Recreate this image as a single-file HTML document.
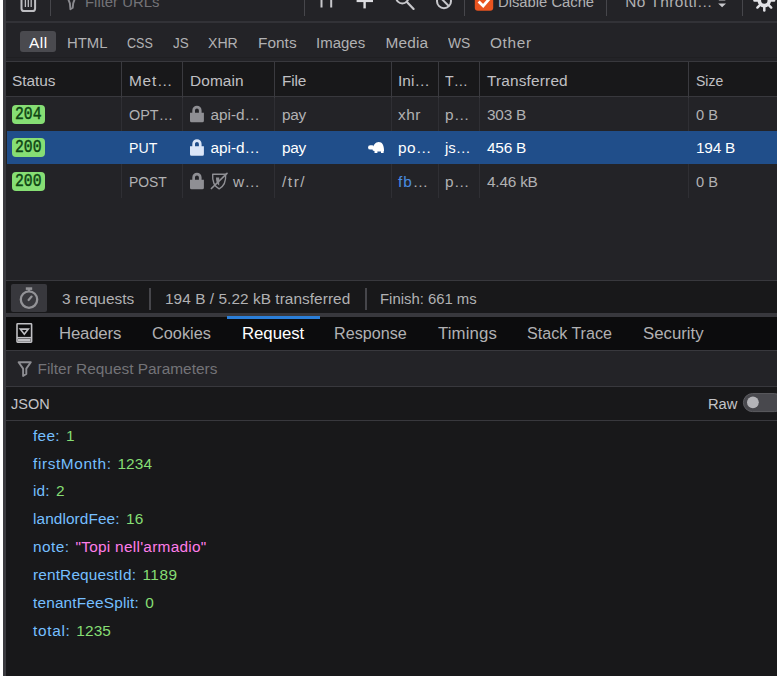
<!DOCTYPE html>
<html><head><meta charset="utf-8"><title>Network</title>
<style>
html,body{margin:0;padding:0;background:#18181a;}
#r{position:relative;width:777px;height:676px;overflow:hidden;font-family:'Liberation Sans', sans-serif;}
#r div{position:absolute;}
#r span{position:absolute;white-space:pre;line-height:20px;height:20px;}
#r svg{position:absolute;overflow:visible;}
</style></head><body><div id="r">
<div style="left:0px;top:0px;width:3px;height:676px;background:#ffffff;"></div>
<div style="left:3px;top:0px;width:3px;height:676px;background:#3a3a3f;"></div>
<div style="left:6px;top:0px;width:771px;height:97px;background:#232327;"></div>
<div style="left:6px;top:20.6px;width:771px;height:2px;background:#323237;"></div>
<div style="left:6px;top:56.6px;width:771px;height:1px;background:#1f1f22;"></div>
<div style="left:6px;top:60.5px;width:771px;height:1.6px;background:#38383d;"></div>
<div style="left:6px;top:62px;width:771px;height:34px;background:#18181a;"></div>
<div style="left:6px;top:96px;width:771px;height:1.5px;background:#38383d;"></div>
<div style="left:6px;top:97px;width:771px;height:184px;background:#232327;"></div>
<div style="left:121px;top:62px;width:1.4px;height:35.5px;background:#3a3a3f;"></div>
<div style="left:121px;top:97.5px;width:1.4px;height:100.8px;background:#2f2f34;"></div>
<div style="left:182px;top:62px;width:1.4px;height:35.5px;background:#3a3a3f;"></div>
<div style="left:182px;top:97.5px;width:1.4px;height:100.8px;background:#2f2f34;"></div>
<div style="left:274px;top:62px;width:1.4px;height:35.5px;background:#3a3a3f;"></div>
<div style="left:274px;top:97.5px;width:1.4px;height:100.8px;background:#2f2f34;"></div>
<div style="left:390.5px;top:62px;width:1.4px;height:35.5px;background:#3a3a3f;"></div>
<div style="left:390.5px;top:97.5px;width:1.4px;height:100.8px;background:#2f2f34;"></div>
<div style="left:438px;top:62px;width:1.4px;height:35.5px;background:#3a3a3f;"></div>
<div style="left:438px;top:97.5px;width:1.4px;height:100.8px;background:#2f2f34;"></div>
<div style="left:479px;top:62px;width:1.4px;height:35.5px;background:#3a3a3f;"></div>
<div style="left:479px;top:97.5px;width:1.4px;height:100.8px;background:#2f2f34;"></div>
<div style="left:688px;top:62px;width:1.4px;height:35.5px;background:#3a3a3f;"></div>
<div style="left:688px;top:97.5px;width:1.4px;height:100.8px;background:#2f2f34;"></div>
<div style="left:7.2px;top:130.6px;width:769.8px;height:33.8px;background:#204e8a;"></div>
<div style="left:6px;top:280.4px;width:771px;height:1px;background:#38383d;"></div>
<div style="left:6px;top:281.4px;width:771px;height:31.6px;background:#18181a;"></div>
<div style="left:6px;top:312.8px;width:771px;height:4.2px;background:#38383d;"></div>
<div style="left:6px;top:317px;width:771px;height:32.5px;background:#0c0c0d;"></div>
<div style="left:6px;top:349.5px;width:771px;height:1px;background:#38383d;"></div>
<div style="left:6px;top:350.5px;width:771px;height:35px;background:#232327;"></div>
<div style="left:6px;top:385.5px;width:771px;height:1px;background:#38383d;"></div>
<div style="left:6px;top:386.5px;width:771px;height:33.5px;background:#18181a;"></div>
<div style="left:6px;top:420px;width:771px;height:1px;background:#38383d;"></div>
<div style="left:6px;top:421px;width:771px;height:255px;background:#18181a;"></div>
<div style="left:226.7px;top:315.9px;width:93px;height:3px;background:#2b7fd9;"></div>
<div style="left:20px;top:30.8px;width:35.8px;height:21.4px;background:#4a4a4f;border-radius:3px"></div>
<div style="left:10.6px;top:284px;width:36.2px;height:27.7px;background:#38383d;border-radius:2px"></div>
<div style="left:50.3px;top:0px;width:1.2px;height:16px;background:#46464b;"></div>
<div style="left:304.3px;top:0px;width:1.2px;height:16px;background:#46464b;"></div>
<div style="left:464px;top:0px;width:1.2px;height:16px;background:#46464b;"></div>
<div style="left:606.3px;top:0px;width:1.2px;height:16px;background:#46464b;"></div>
<div style="left:742.3px;top:0px;width:1.2px;height:16px;background:#46464b;"></div>
<div style="left:149.3px;top:287.6px;width:1.4px;height:22px;background:#46464b;"></div>
<div style="left:365.2px;top:287.6px;width:1.4px;height:22px;background:#46464b;"></div>
<div style="left:12px;top:105.0px;width:33.2px;height:19px;background:#86de74;border-radius:4px"></div>
<div style="left:12px;top:138.0px;width:33.2px;height:19px;background:#86de74;border-radius:4px"></div>
<div style="left:12px;top:172.0px;width:33.2px;height:19px;background:#86de74;border-radius:4px"></div>
<svg width="777" height="676" viewBox="0 0 777 676" style="left:0;top:0" fill="none">
<!-- trash -->
<g stroke="#bebec2" stroke-width="2" fill="none">
<path d="M21.5 -6 V8.4 a2.6 2.6 0 0 0 2.6 2.6 H32.5 a2.6 2.6 0 0 0 2.6 -2.6 V-6"/>
<path d="M25.4 -4 V7 M28.3 -4 V7 M31.2 -4 V7" stroke-width="1.3"/>
</g>
<!-- filter funnel top (cut) -->
<path d="M67.4 -3 L69.9 3.4 L70.4 9.2 L72.7 7.8 L73.2 3.4 L75.4 -3" stroke="#8a8a8f" stroke-width="1.9" fill="none" stroke-linejoin="round"/>
<!-- pause -->
<path d="M321.5 -6 V7.5 M331.2 -6 V7.5" stroke="#c8c8cc" stroke-width="2"/>
<!-- plus -->
<path d="M364.6 -8 V8.4" stroke="#dcdce0" stroke-width="2.4"/><path d="M356.6 0.6 H373" stroke="#dcdce0" stroke-width="3"/>
<!-- search -->
<circle cx="402.3" cy="-2.8" r="6.2" stroke="#c8c8cc" stroke-width="2"/>
<path d="M406.9 1.9 L413.6 8.9" stroke="#c8c8cc" stroke-width="2.2" stroke-linecap="round"/>
<!-- block -->
<circle cx="444" cy="1.2" r="7" stroke="#c8c8cc" stroke-width="2"/>
<path d="M439 -3.8 L449 6.2" stroke="#c8c8cc" stroke-width="2"/>
<!-- checkbox -->
<rect x="474.8" y="-8" width="18.4" height="18.8" rx="3" fill="#e95420"/>
<path d="M478.6 1.4 L483.2 6 L491.4 -3.6" stroke="#ffffff" stroke-width="2.8" fill="none"/>
<!-- throttle arrow -->
<path d="M718.2 3.4 H726 L722.1 7.2 Z" fill="#c8c8cc"/>
<path d="M718.6 0.6 H725.6 L722.1 -3 Z" fill="#c8c8cc"/>
<!-- gear -->
<g transform="translate(764.3 0.6)" stroke="#e2e2e6" fill="none">
<circle r="5" stroke-width="3.6"/>
<path d="M0 6 V9.8" stroke-width="2.5" stroke-linecap="round" transform="rotate(0)"/>
<path d="M0 6 V9.8" stroke-width="2.5" stroke-linecap="round" transform="rotate(45)"/>
<path d="M0 6 V9.8" stroke-width="2.5" stroke-linecap="round" transform="rotate(90)"/>
<path d="M0 6 V9.8" stroke-width="2.5" stroke-linecap="round" transform="rotate(135)"/>
<path d="M0 6 V9.8" stroke-width="2.5" stroke-linecap="round" transform="rotate(180)"/>
<path d="M0 6 V9.8" stroke-width="2.5" stroke-linecap="round" transform="rotate(225)"/>
<path d="M0 6 V9.8" stroke-width="2.5" stroke-linecap="round" transform="rotate(270)"/>
<path d="M0 6 V9.8" stroke-width="2.5" stroke-linecap="round" transform="rotate(315)"/>
</g>
<!-- locks -->
<path d="M190 112.8 h13.9 v7.9 a1.5 1.5 0 0 1 -1.5 1.5 h-10.9 a1.5 1.5 0 0 1 -1.5 -1.5 z" fill="#8f8f94"/>
<path d="M193.65 113.4 v-3 a3.3 3.3 0 0 1 6.6 0 v3" fill="none" stroke="#8f8f94" stroke-width="2.7"/>
<path d="M190 146.3 h13.9 v7.9 a1.5 1.5 0 0 1 -1.5 1.5 h-10.9 a1.5 1.5 0 0 1 -1.5 -1.5 z" fill="#dbe6f8"/>
<path d="M193.65 146.9 v-3 a3.3 3.3 0 0 1 6.6 0 v3" fill="none" stroke="#dbe6f8" stroke-width="2.7"/>
<path d="M190 179.8 h13.9 v7.9 a1.5 1.5 0 0 1 -1.5 1.5 h-10.9 a1.5 1.5 0 0 1 -1.5 -1.5 z" fill="#8f8f94"/>
<path d="M193.65 180.4 v-3 a3.3 3.3 0 0 1 6.6 0 v3" fill="none" stroke="#8f8f94" stroke-width="2.7"/>
<!-- tracking shield -->
<g stroke="#8f8f94" stroke-width="1.4" fill="none" stroke-linejoin="round">
<path d="M212.7 174.2 h12.9 c0.4 5 -0.6 11.4 -6.45 14.6 c-5.85 -3.2 -6.85 -9.6 -6.45 -14.6 z"/>
<path d="M216 177.4 h3.2 v8.2 c-2.4 -1.6 -3.3 -4.6 -3.2 -8.2 z" fill="#8f8f94" stroke="none"/>
<path d="M211.4 188.5 L227 173.4" stroke-width="1.7" stroke-linecap="round"/>
</g>
<!-- turtle -->
<g fill="#ffffff">
<path d="M372.6 150.2 c0 -5 3 -8.3 6.2 -8.3 c3.4 0 5.2 3.4 5.2 8.3 v1 h-0.4 v1.9 h-2.6 v-1.7 h-3.6 v1.7 h-2.9 v-2 c-1 -0.2 -1.6 -0.5 -1.9 -0.9z"/>
<path d="M368 147.4 a2.3 2.2 0 0 1 2.3 -2.2 h2.2 a2.2 2.2 0 0 1 1.4 2 v2.4 h-3.6 a2.3 2.2 0 0 1 -2.3 -2.2 z"/>
</g>
<!-- stopwatch -->
<g stroke="#939397" stroke-width="2.3" fill="none">
<circle cx="29" cy="299.6" r="8.2"/>
<path d="M25.8 288.6 h6.4" stroke-width="2.6"/>
<path d="M29 289 v2.4" stroke-width="2.2"/>
<path d="M28.6 300 L31.6 296.6" stroke-width="2.2" stroke-linecap="round"/>
</g>
<!-- sidebar toggle -->
<g stroke="#c0c0c4" stroke-width="1.6" fill="none">
<rect x="17" y="323.8" width="14.6" height="18.4" rx="0.6"/>
<path d="M20.4 329.2 h7.8 l-3.9 5 z" stroke-width="1.7"/>
<path d="M17 337.7 h14.6"/>
<path d="M18 340.2 h12.6" stroke-width="2.6"/>
</g>
<!-- filter funnel -->
<path d="M18.6 362.3 H30.8 L26.3 368.6 V374 L23.1 376 V368.6 Z" stroke="#8d8d92" stroke-width="1.9" fill="none" stroke-linejoin="round"/>
<!-- toggle switch -->
<rect x="743.4" y="393.6" width="40" height="18" rx="9" fill="#48484d" stroke="#5c5c61" stroke-width="1"/>
<circle cx="752.9" cy="402.3" r="5.9" fill="#b4b4b8"/>
</svg>

<span style="left:84.5px;top:-8.5px;color:#737378;font-size:15.4px;letter-spacing:0.00px;font-family:'Liberation Sans', sans-serif;transform-origin:0 50%;transform:scaleX(0.967)">Filter URLs</span>
<span style="left:498.0px;top:-8.5px;color:#b1b1b3;font-size:15.4px;letter-spacing:0.00px;font-family:'Liberation Sans', sans-serif;transform-origin:0 50%;transform:scaleX(0.960)">Disable Cache</span>
<span style="left:625.3px;top:-8.5px;color:#b1b1b3;font-size:15.4px;letter-spacing:0.45px;font-family:'Liberation Sans', sans-serif">No Throttl…</span>
<span style="left:29.0px;top:32.9px;color:#ffffff;font-size:15.4px;letter-spacing:0.48px;font-family:'Liberation Sans', sans-serif">All</span>
<span style="left:67.0px;top:32.9px;color:#b1b1b3;font-size:15.4px;letter-spacing:0.00px;font-family:'Liberation Sans', sans-serif;transform-origin:0 50%;transform:scaleX(0.966)">HTML</span>
<span style="left:127.0px;top:32.9px;color:#b1b1b3;font-size:15.4px;letter-spacing:0.00px;font-family:'Liberation Sans', sans-serif;transform-origin:0 50%;transform:scaleX(0.813)">CSS</span>
<span style="left:173.0px;top:32.9px;color:#b1b1b3;font-size:15.4px;letter-spacing:0.00px;font-family:'Liberation Sans', sans-serif;transform-origin:0 50%;transform:scaleX(0.870)">JS</span>
<span style="left:208.0px;top:32.9px;color:#b1b1b3;font-size:15.4px;letter-spacing:0.00px;font-family:'Liberation Sans', sans-serif;transform-origin:0 50%;transform:scaleX(0.917)">XHR</span>
<span style="left:258.0px;top:32.9px;color:#b1b1b3;font-size:15.4px;letter-spacing:0.03px;font-family:'Liberation Sans', sans-serif">Fonts</span>
<span style="left:316.0px;top:32.9px;color:#b1b1b3;font-size:15.4px;letter-spacing:0.00px;font-family:'Liberation Sans', sans-serif;transform-origin:0 50%;transform:scaleX(0.974)">Images</span>
<span style="left:385.5px;top:32.9px;color:#b1b1b3;font-size:15.4px;letter-spacing:0.15px;font-family:'Liberation Sans', sans-serif">Media</span>
<span style="left:447.5px;top:32.9px;color:#b1b1b3;font-size:15.4px;letter-spacing:0.00px;font-family:'Liberation Sans', sans-serif;transform-origin:0 50%;transform:scaleX(0.899)">WS</span>
<span style="left:490.0px;top:32.9px;color:#b1b1b3;font-size:15.4px;letter-spacing:0.65px;font-family:'Liberation Sans', sans-serif">Other</span>
<span style="left:12.0px;top:71.0px;color:#c0c0c4;font-size:15.4px;letter-spacing:-0.03px;font-family:'Liberation Sans', sans-serif">Status</span>
<span style="left:129.0px;top:71.0px;color:#c0c0c4;font-size:15.4px;letter-spacing:0.80px;font-family:'Liberation Sans', sans-serif">Met…</span>
<span style="left:190.0px;top:71.0px;color:#c0c0c4;font-size:15.4px;letter-spacing:0.11px;font-family:'Liberation Sans', sans-serif">Domain</span>
<span style="left:282.0px;top:71.0px;color:#c0c0c4;font-size:15.4px;letter-spacing:-0.15px;font-family:'Liberation Sans', sans-serif">File</span>
<span style="left:398.0px;top:71.0px;color:#c0c0c4;font-size:15.4px;letter-spacing:0.05px;font-family:'Liberation Sans', sans-serif">Ini…</span>
<span style="left:445.0px;top:71.0px;color:#c0c0c4;font-size:15.4px;letter-spacing:0.00px;font-family:'Liberation Sans', sans-serif;transform-origin:0 50%;transform:scaleX(0.923)">T…</span>
<span style="left:487.0px;top:71.0px;color:#c0c0c4;font-size:15.4px;letter-spacing:0.17px;font-family:'Liberation Sans', sans-serif">Transferred</span>
<span style="left:696.0px;top:71.0px;color:#c0c0c4;font-size:15.4px;letter-spacing:0.00px;font-family:'Liberation Sans', sans-serif;transform-origin:0 50%;transform:scaleX(0.910)">Size</span>
<span style="left:129.0px;top:105.0px;color:#b1b1b3;font-size:15.4px;letter-spacing:0.00px;font-family:'Liberation Sans', sans-serif;transform-origin:0 50%;transform:scaleX(0.937)">OPT…</span>
<span style="left:210.5px;top:105.0px;color:#b1b1b3;font-size:15.4px;letter-spacing:-0.03px;font-family:'Liberation Sans', sans-serif">api-d…</span>
<span style="left:282.0px;top:105.0px;color:#b1b1b3;font-size:15.4px;letter-spacing:-0.25px;font-family:'Liberation Sans', sans-serif">pay</span>
<span style="left:398.0px;top:105.0px;color:#b1b1b3;font-size:15.4px;letter-spacing:0.51px;font-family:'Liberation Sans', sans-serif">xhr</span>
<span style="left:445.0px;top:105.0px;color:#b1b1b3;font-size:15.4px;letter-spacing:0.34px;font-family:'Liberation Sans', sans-serif">p…</span>
<span style="left:487.0px;top:105.0px;color:#b1b1b3;font-size:15.4px;letter-spacing:-0.22px;font-family:'Liberation Sans', sans-serif">303 B</span>
<span style="left:696.0px;top:105.0px;color:#b1b1b3;font-size:15.4px;letter-spacing:0.00px;font-family:'Liberation Sans', sans-serif;transform-origin:0 50%;transform:scaleX(0.951)">0 B</span>
<span style="left:129.0px;top:137.9px;color:#ffffff;font-size:15.4px;letter-spacing:0.00px;font-family:'Liberation Sans', sans-serif;transform-origin:0 50%;transform:scaleX(0.918)">PUT</span>
<span style="left:210.5px;top:137.9px;color:#ffffff;font-size:15.4px;letter-spacing:-0.03px;font-family:'Liberation Sans', sans-serif">api-d…</span>
<span style="left:282.0px;top:137.9px;color:#ffffff;font-size:15.4px;letter-spacing:-0.25px;font-family:'Liberation Sans', sans-serif">pay</span>
<span style="left:398.0px;top:137.9px;color:#ffffff;font-size:15.4px;letter-spacing:0.39px;font-family:'Liberation Sans', sans-serif">po…</span>
<span style="left:445.0px;top:137.9px;color:#ffffff;font-size:15.4px;letter-spacing:0.00px;font-family:'Liberation Sans', sans-serif;transform-origin:0 50%;transform:scaleX(0.971)">js…</span>
<span style="left:487.0px;top:137.9px;color:#ffffff;font-size:15.4px;letter-spacing:-0.22px;font-family:'Liberation Sans', sans-serif">456 B</span>
<span style="left:696.0px;top:137.9px;color:#ffffff;font-size:15.4px;letter-spacing:-0.22px;font-family:'Liberation Sans', sans-serif">194 B</span>
<span style="left:129.0px;top:172.0px;color:#b1b1b3;font-size:15.4px;letter-spacing:0.00px;font-family:'Liberation Sans', sans-serif;transform-origin:0 50%;transform:scaleX(0.901)">POST</span>
<span style="left:233.0px;top:172.0px;color:#b1b1b3;font-size:15.4px;letter-spacing:0.38px;font-family:'Liberation Sans', sans-serif">w…</span>
<span style="left:282.0px;top:172.0px;color:#b1b1b3;font-size:15.4px;letter-spacing:1.56px;font-family:'Liberation Sans', sans-serif">/tr/</span>
<span style="left:398.0px;top:172.0px;color:#4a8be0;font-size:15.4px;letter-spacing:0.96px;font-family:'Liberation Sans', sans-serif">fb<i style="font-style:normal;color:#b1b1b3">…</i></span>
<span style="left:445.0px;top:172.0px;color:#b1b1b3;font-size:15.4px;letter-spacing:0.34px;font-family:'Liberation Sans', sans-serif">p…</span>
<span style="left:487.0px;top:172.0px;color:#b1b1b3;font-size:15.4px;letter-spacing:-0.22px;font-family:'Liberation Sans', sans-serif">4.46 kB</span>
<span style="left:696.0px;top:172.0px;color:#b1b1b3;font-size:15.4px;letter-spacing:0.00px;font-family:'Liberation Sans', sans-serif;transform-origin:0 50%;transform:scaleX(0.951)">0 B</span>
<span style="left:15.3px;top:105.2px;color:#0e4513;font-size:18.4px;letter-spacing:0.00px;font-family:'Liberation Mono', monospace;-webkit-text-stroke:0.45px #0e4513;transform-origin:0 50%;transform:scaleX(0.803)">204</span>
<span style="left:15.3px;top:138.2px;color:#0e4513;font-size:18.4px;letter-spacing:0.00px;font-family:'Liberation Mono', monospace;-webkit-text-stroke:0.45px #0e4513;transform-origin:0 50%;transform:scaleX(0.803)">200</span>
<span style="left:15.3px;top:172.2px;color:#0e4513;font-size:18.4px;letter-spacing:0.00px;font-family:'Liberation Mono', monospace;-webkit-text-stroke:0.45px #0e4513;transform-origin:0 50%;transform:scaleX(0.803)">200</span>
<span style="left:62.0px;top:289.0px;color:#b1b1b3;font-size:15.4px;letter-spacing:0.04px;font-family:'Liberation Sans', sans-serif">3 requests</span>
<span style="left:165.0px;top:289.0px;color:#b1b1b3;font-size:15.4px;letter-spacing:0.05px;font-family:'Liberation Sans', sans-serif">194 B / 5.22 kB transferred</span>
<span style="left:380.0px;top:289.0px;color:#b1b1b3;font-size:15.4px;letter-spacing:0.00px;font-family:'Liberation Sans', sans-serif;transform-origin:0 50%;transform:scaleX(0.966)">Finish: 661 ms</span>
<span style="left:59.0px;top:324.0px;color:#b1b1b3;font-size:16.8px;letter-spacing:-0.19px;font-family:'Liberation Sans', sans-serif">Headers</span>
<span style="left:152.0px;top:324.0px;color:#b1b1b3;font-size:16.8px;letter-spacing:0.00px;font-family:'Liberation Sans', sans-serif;transform-origin:0 50%;transform:scaleX(0.973)">Cookies</span>
<span style="left:242.0px;top:324.0px;color:#ffffff;font-size:16.8px;letter-spacing:-0.05px;font-family:'Liberation Sans', sans-serif">Request</span>
<span style="left:334.0px;top:324.0px;color:#b1b1b3;font-size:16.8px;letter-spacing:0.00px;font-family:'Liberation Sans', sans-serif;transform-origin:0 50%;transform:scaleX(0.962)">Response</span>
<span style="left:438.0px;top:324.0px;color:#b1b1b3;font-size:16.8px;letter-spacing:0.12px;font-family:'Liberation Sans', sans-serif">Timings</span>
<span style="left:527.0px;top:324.0px;color:#b1b1b3;font-size:16.8px;letter-spacing:0.00px;font-family:'Liberation Sans', sans-serif;transform-origin:0 50%;transform:scaleX(0.958)">Stack Trace</span>
<span style="left:643.0px;top:324.0px;color:#b1b1b3;font-size:16.8px;letter-spacing:-0.00px;font-family:'Liberation Sans', sans-serif">Security</span>
<span style="left:37.5px;top:358.7px;color:#737378;font-size:15.4px;letter-spacing:0.01px;font-family:'Liberation Sans', sans-serif">Filter Request Parameters</span>
<span style="left:11.3px;top:394.2px;color:#c4c4c8;font-size:15.4px;letter-spacing:0.00px;font-family:'Liberation Sans', sans-serif;transform-origin:0 50%;transform:scaleX(0.940)">JSON</span>
<span style="left:708.3px;top:394.2px;color:#c4c4c8;font-size:15.4px;letter-spacing:0.00px;font-family:'Liberation Sans', sans-serif;transform-origin:0 50%;transform:scaleX(0.955)">Raw</span>
<span style="left:33.0px;top:425.7px;color:#75bfff;font-size:15.4px;letter-spacing:0.32px;font-family:'Liberation Sans', sans-serif">fee:</span>
<span style="left:66.0px;top:425.7px;color:#86de74;font-size:15.4px;letter-spacing:0.00px;font-family:'Liberation Sans', sans-serif">1</span>
<span style="left:33.0px;top:453.6px;color:#75bfff;font-size:15.4px;letter-spacing:0.61px;font-family:'Liberation Sans', sans-serif">firstMonth:</span>
<span style="left:117.4px;top:453.6px;color:#86de74;font-size:15.4px;letter-spacing:0.16px;font-family:'Liberation Sans', sans-serif">1234</span>
<span style="left:33.0px;top:481.4px;color:#75bfff;font-size:15.4px;letter-spacing:0.13px;font-family:'Liberation Sans', sans-serif">id:</span>
<span style="left:55.9px;top:481.4px;color:#86de74;font-size:15.4px;letter-spacing:0.00px;font-family:'Liberation Sans', sans-serif">2</span>
<span style="left:33.0px;top:509.2px;color:#75bfff;font-size:15.4px;letter-spacing:0.08px;font-family:'Liberation Sans', sans-serif">landlordFee:</span>
<span style="left:125.9px;top:509.2px;color:#86de74;font-size:15.4px;letter-spacing:0.25px;font-family:'Liberation Sans', sans-serif">16</span>
<span style="left:33.0px;top:537.1px;color:#75bfff;font-size:15.4px;letter-spacing:0.46px;font-family:'Liberation Sans', sans-serif">note:</span>
<span style="left:75.5px;top:537.1px;color:#ff7de9;font-size:15.4px;letter-spacing:0.27px;font-family:'Liberation Sans', sans-serif">&quot;Topi nell&#x27;armadio&quot;</span>
<span style="left:33.0px;top:565.0px;color:#75bfff;font-size:15.4px;letter-spacing:0.15px;font-family:'Liberation Sans', sans-serif">rentRequestId:</span>
<span style="left:142.4px;top:565.0px;color:#86de74;font-size:15.4px;letter-spacing:0.54px;font-family:'Liberation Sans', sans-serif">1189</span>
<span style="left:33.0px;top:592.8px;color:#75bfff;font-size:15.4px;letter-spacing:0.16px;font-family:'Liberation Sans', sans-serif">tenantFeeSplit:</span>
<span style="left:145.2px;top:592.8px;color:#86de74;font-size:15.4px;letter-spacing:0.00px;font-family:'Liberation Sans', sans-serif">0</span>
<span style="left:33.0px;top:620.6px;color:#75bfff;font-size:15.4px;letter-spacing:0.69px;font-family:'Liberation Sans', sans-serif">total:</span>
<span style="left:76.2px;top:620.6px;color:#86de74;font-size:15.4px;letter-spacing:0.16px;font-family:'Liberation Sans', sans-serif">1235</span>
</div></body></html>
